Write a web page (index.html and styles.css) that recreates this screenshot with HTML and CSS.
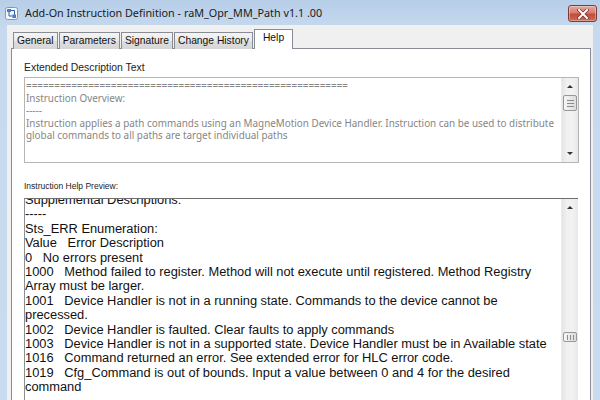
FILE: index.html
```html
<!DOCTYPE html>
<html lang="en">
<head>
    <meta charset="UTF-8">
    <title>Add-On Instruction Definition - raM_Opr_MM_Path v1.1 .00</title>
    <link rel="stylesheet" href="styles.css">
</head>
<body>
    <div class="window">
        <div class="titlebar">
            <svg class="app-icon" width="13" height="13" viewBox="0 0 13 13">
                <rect x="0.5" y="0.5" width="12" height="12" rx="2" fill="#f4f7fb" stroke="#8a97a8"/>
                <rect x="2" y="2" width="4" height="3" fill="#3f7fd0"/>
                <rect x="7.5" y="7.5" width="3.5" height="3.5" fill="#3f7fd0"/>
                <path d="M4 5 V9 H7.5 M6 3.5 H9.5 V7.5" fill="none" stroke="#2a5fa8" stroke-width="1"/>
            </svg>
            <span class="title">Add-On Instruction Definition - raM_Opr_MM_Path v1.1 .00</span>
            <div class="close-btn">
                <svg width="12" height="10" viewBox="0 0 12 10">
                    <path d="M2 1 L10 9 M10 1 L2 9" stroke="#7a2a22" stroke-width="3.4" stroke-linecap="square"/>
                    <path d="M2 1 L10 9 M10 1 L2 9" stroke="#ffffff" stroke-width="2" stroke-linecap="square"/>
                </svg>
            </div>
        </div>

        <div class="client">
            <div class="tabs">
                <div class="tab">General</div>
                <div class="tab">Parameters</div>
                <div class="tab">Signature</div>
                <div class="tab">Change History</div>
                <div class="tab active">Help</div>
            </div>

            <div class="panel">
                <div class="label">Extended Description Text</div>
                <div class="ext-box">
                    <div class="ext-text">
                        <div>=========================================================</div>
                        <div>Instruction Overview:</div>
                        <div>-----</div>
                        <div>Instruction applies a path commands using an MagneMotion Device Handler. Instruction can be used to distribute global commands to all paths are target individual paths</div>
                    </div>
                    <div class="vscroll">
                        <div class="arrow up"></div>
                        <div class="track">
                            <div class="thumb tall"><span></span><span></span><span></span></div>
                        </div>
                        <div class="arrow down"></div>
                    </div>
                </div>

                <div class="label small">Instruction Help Preview:</div>
                <div class="help-box">
                    <div class="help-text">
                        <div>Supplemental Descriptions:</div>
                        <div>-----</div>
                        <div>Sts_ERR Enumeration:</div>
                        <div>Value   Error Description</div>
                        <div>0   No errors present</div>
                        <div>1000   Method failed to register. Method will not execute until registered. Method Registry Array must be larger.</div>
                        <div>1001   Device Handler is not in a running state. Commands to the device cannot be precessed.</div>
                        <div>1002   Device Handler is faulted. Clear faults to apply commands</div>
                        <div>1003   Device Handler is not in a supported state. Device Handler must be in Available state</div>
                        <div>1016   Command returned an error. See extended error for HLC error code.</div>
                        <div>1019   Cfg_Command is out of bounds. Input a value between 0 and 4 for the desired command</div>
                    </div>
                    <div class="vscroll">
                        <div class="arrow up"></div>
                        <div class="track">
                            <div class="thumb short"><span></span><span></span><span></span></div>
                        </div>
                        <div class="arrow down"></div>
                    </div>
                </div>
            </div>
        </div>
    </div>
</body>
</html>
```

FILE: styles.css
```css
* {
    box-sizing: border-box;
}

body {
    margin: 0;
    background: #c4d8ee;
    overflow: hidden;
    font-family: 'Noto Sans', 'Liberation Sans', sans-serif;
}

.window {
    width: 600px;
    height: 400px;
    display: flex;
    flex-direction: column;
    padding: 0 7px;
    background: linear-gradient(#b7cee8, #c6d9ee 30px, #c9dbef);
    overflow: hidden;
}

/* title bar */
.titlebar {
    height: 25px;
    flex: none;
    display: flex;
    align-items: center;
    margin: 0 -7px;
    padding: 0 3px 0 5px;
}

.app-icon {
    flex: none;
    margin-top: 2px;
}

.title {
    margin-left: 7px;
    font-size: 10.8px;
    color: #1a1a1a;
    white-space: nowrap;
}

.close-btn {
    margin-left: auto;
    margin-top: 2px;
    width: 29px;
    height: 17px;
    display: flex;
    align-items: center;
    justify-content: center;
    border: 1px solid #7e3a33;
    border-radius: 3px;
    background: linear-gradient(#e6a79e, #d67d70 45%, #c24c3c 55%, #cf6a55);
    box-shadow: inset 0 0 0 1px rgba(255, 255, 255, 0.35);
}

/* client area */
.client {
    flex: 1;
    display: flex;
    flex-direction: column;
    background: #f0f0f0;
    padding: 5px 2px 0 4px;
}

.tabs {
    display: flex;
    align-items: flex-end;
    height: 19px;
    padding-left: 2px;
    margin-bottom: -1px;
    position: relative;
    z-index: 1;
}

.tab {
    height: 17px;
    padding: 0 3px;
    margin-right: 1px;
    border: 1px solid #898c95;
    border-bottom: none;
    background: linear-gradient(#f4f4f4, #eaeaea 50%, #dedede 50%, #d6d6d6);
    font-family: 'Liberation Sans', sans-serif;
    font-size: 10.3px;
    line-height: 15px;
    color: #111;
    white-space: nowrap;
}

.tab.active {
    height: 20px;
    padding: 0 8px;
    background: #fff;
}

.panel {
    flex: 1;
    border: 1px solid #898c95;
    background: #fff;
    padding: 0 11px 0 12px;
}

.label {
    margin-top: 12px;
    font-family: 'Liberation Sans', sans-serif;
    font-size: 10.4px;
    line-height: 14px;
    color: #222;
}

.label.small {
    margin-top: 17px;
    font-size: 8.5px;
    line-height: 12px;
}

/* extended description */
.ext-box {
    display: flex;
    height: 86px;
    margin-top: 2px;
    border: 1px solid #b5b5b5;
    background: #fff;
}

.ext-text {
    flex: 1;
    padding: 1px 2px 0 1px;
    font-size: 9.9px;
    line-height: 12.5px;
    color: #858585;
    overflow: hidden;
}

/* help preview */
.help-box {
    display: flex;
    height: 220px;
    margin-top: 6px;
    border: 1px solid #8e8f8f;
    border-top-color: #6f6f6f;
    border-right: none;
    margin-right: 1px;
    background: #fff;
}

.help-text {
    flex: 1;
    padding: 0 9px 0 0;
    font-family: 'Liberation Sans', sans-serif;
    font-size: 12.85px;
    line-height: 14.4px;
    color: #111;
    overflow: hidden;
}

.help-text > div {
    white-space: pre-wrap;
}

.help-text > div:first-child {
    margin-top: -6px;
}

/* scrollbars */
.vscroll {
    width: 17px;
    flex: none;
    display: flex;
    flex-direction: column;
    background: linear-gradient(90deg, #e4e4e4, #f1f1f1 30%, #f1f1f1 70%, #e8e8e8);
    border-left: 1px solid #ececec;
}

.arrow {
    height: 17px;
    flex: none;
    display: flex;
    align-items: center;
    justify-content: center;
}

.arrow::before {
    content: "";
    border-left: 3px solid transparent;
    border-right: 3px solid transparent;
}

.arrow.up::before {
    border-bottom: 3px solid #333;
}

.arrow.down::before {
    border-top: 3px solid #333;
}

.track {
    flex: 1;
}

.thumb {
    margin: 0 1px;
    display: flex;
    flex-direction: column;
    align-items: center;
    justify-content: center;
    gap: 2px;
    border: 1px solid #979797;
    border-radius: 2px;
    background: linear-gradient(90deg, #f6f6f6, #e9e9e9 50%, #dcdcdc);
}

.thumb span {
    width: 7px;
    height: 1px;
    background: #8b8b8b;
}

.thumb.tall {
    height: 16px;
}

.thumb.short {
    height: 10px;
    margin-top: 116px;
    flex-direction: row;
}

.thumb.short span {
    width: 1px;
    height: 5px;
}
```
